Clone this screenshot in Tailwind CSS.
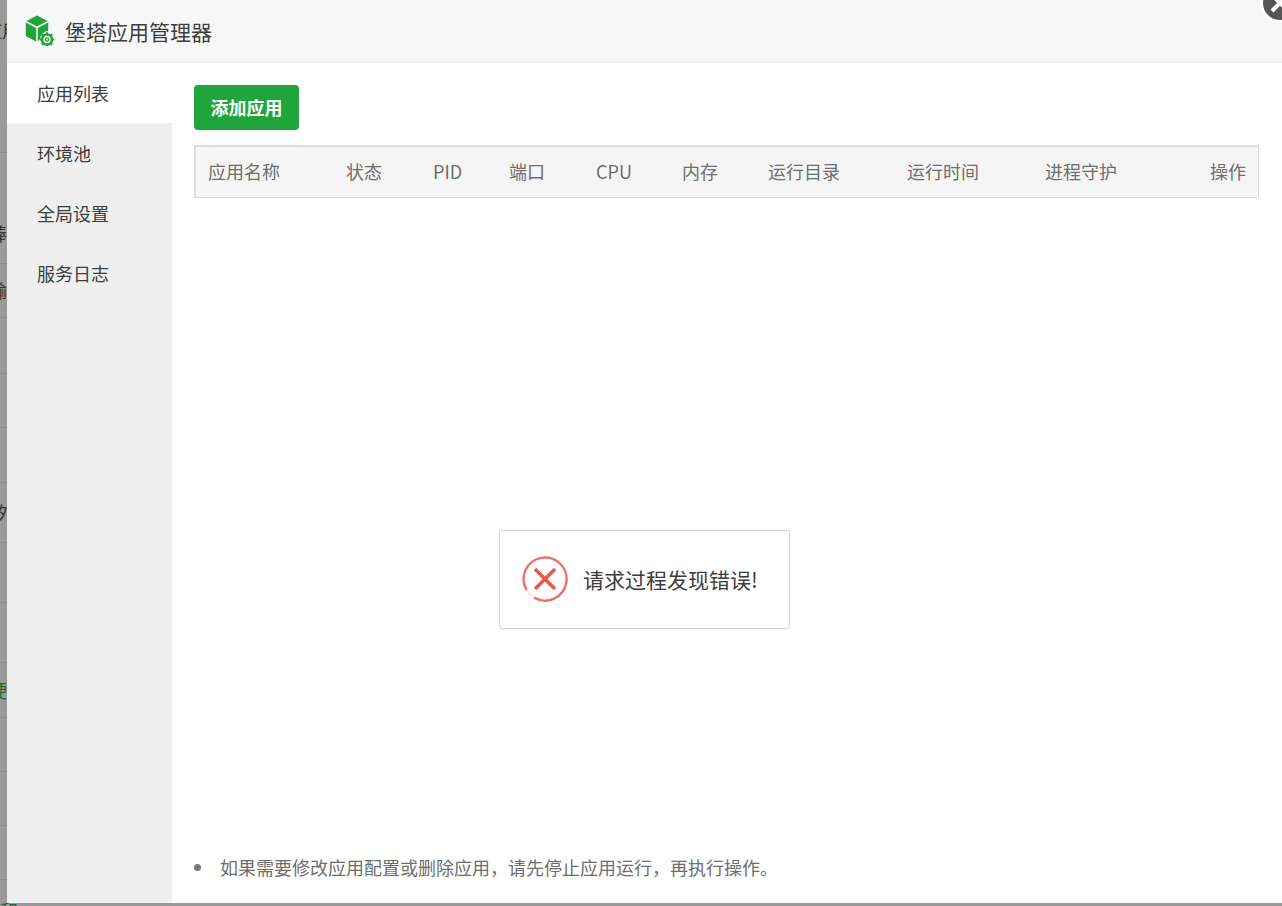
<!DOCTYPE html>
<html lang="zh-CN">
<head>
  <meta charset="UTF-8">
  <title>堡塔应用管理器</title>
  <script src="https://cdn.jsdelivr.net/npm/@tailwindcss/browser@4"></script>
</head>
<body class="relative h-[906px] w-[1282px] overflow-hidden bg-[#9a9a9a] font-['Noto_Sans_CJK_SC','Noto_Sans',sans-serif]">

  <!-- page behind the modal, only a sliver shows -->
  <div class="flex w-[40px] flex-col overflow-hidden text-[18px] leading-none whitespace-nowrap text-[#333]">
    <div class="h-[153px] border-b border-[#8c8c8c] pt-[21px]"><span class="-ml-[16px] block">应用</span></div>
    <div class="h-[111px] border-b border-[#8c8c8c]"><span class="-ml-[11px] block pt-[71px]">棒</span></div>
    <div class="h-[54px] border-b border-[#8c8c8c]"><span class="-ml-[11px] block pt-[17px]">输</span></div>
    <div class="h-[56px] border-b border-[#8c8c8c]"></div>
    <div class="h-[54px] border-b border-[#8c8c8c]"></div>
    <div class="h-[55px] border-b border-[#8c8c8c]"></div>
    <div class="h-[60px] border-b border-[#8c8c8c]"><span class="-ml-[3px] block pt-[20px]">外</span></div>
    <div class="h-[60px] border-b border-[#8c8c8c]"></div>
    <div class="h-[60px] border-b border-[#8c8c8c]"></div>
    <div class="h-[55px] border-b border-[#8c8c8c] text-[#1c6b30]"><span class="-ml-[11px] block pt-[18px]">硬</span></div>
    <div class="h-[54px] border-b border-[#8c8c8c]"></div>
    <div class="h-[54px] border-b border-[#8c8c8c]"></div>
    <div class="h-[54px] border-b border-[#8c8c8c]"></div>
    <div class="h-[26px] pt-[21px] text-[#1c6b30]">和</div>
  </div>

  <!-- modal -->
  <div class="absolute top-0 left-[7px] flex h-[903px] w-[1275px] flex-col bg-white">
    <header class="flex h-[63px] shrink-0 items-center border-b border-[#eee] bg-[#f7f7f7] pl-[17px]">
      <svg class="mb-[2px] h-[32px] w-[32px]" viewBox="0 0 32 32">
        <path fill="#20a53a" d="M13 1.5 23.6 7 13 12.6 2.4 7zM1.8 8.6 12.2 14v13.6L1.8 22zM24.2 8.6V17a8 8 0 0 0-8 7.6l-2.4 3V14z"/>
        <g fill="none" stroke="#20a53a" transform="translate(1 1)">
          <circle cx="22" cy="24.5" r="5" stroke-width="2.6"/>
          <circle cx="22" cy="24.5" r="1.6" stroke-width="1.2"/>
          <path stroke-width="2.2" d="M22 17.2v2.4M22 29.4v2.4M14.7 24.5h2.4M26.9 24.5h2.4M16.8 19.3l1.7 1.7M25.5 28l1.7 1.7M16.8 29.7l1.7-1.7M25.5 21l1.7-1.7"/>
        </g>
      </svg>
      <h1 class="ml-[9px] text-[21px] leading-none font-normal text-[#3d3d3d]">堡塔应用管理器</h1>
    </header>

    <div class="flex min-h-0 flex-1">
      <nav class="w-[165px] shrink-0 bg-[#efefef] text-[18px] text-[#3d3d3d]">
        <div class="flex h-[60px] items-center bg-white pl-[30px]">应用列表</div>
        <div class="flex h-[60px] items-center pl-[30px]">环境池</div>
        <div class="flex h-[60px] items-center pl-[30px]">全局设置</div>
        <div class="flex h-[60px] items-center pl-[30px]">服务日志</div>
      </nav>

      <main class="flex min-w-0 flex-1 flex-col pt-[22px] pr-[23px] pl-[22px]">
        <button class="h-[45px] w-[105px] rounded-[4px] bg-[#20a53a] text-[18px] font-bold text-white">添加应用</button>
        <div class="mt-[15px] grid h-[53px] grid-cols-[138px_87px_76px_87px_86px_86px_139px_138px_1fr_auto] items-center border border-t-2 border-l-2 border-[#ddd] bg-[#f5f5f5] pr-[12px] pb-[2px] pl-[12px] text-[18px] text-[#6e6e6e]">
          <span>应用名称</span>
          <span>状态</span>
          <span>PID</span>
          <span>端口</span>
          <span>CPU</span>
          <span>内存</span>
          <span>运行目录</span>
          <span>运行时间</span>
          <span>进程守护</span>
          <span class="text-right">操作</span>
        </div>
        <ul class="mt-auto mb-[23px] flex items-center text-[18px] leading-[26px] text-[#6e6e6e]">
          <li class="flex items-center">
            <span class="h-[7px] w-[7px] rounded-full bg-[#777]"></span>
            <span class="ml-[19px]">如果需要修改应用配置或删除应用，请先停止应用运行，再执行操作。</span>
          </li>
        </ul>
      </main>
    </div>
  </div>

  <!-- close button -->
  <div class="absolute -top-[17px] left-[1260px] flex h-[40px] w-[40px] items-center justify-center rounded-full border-[3px] border-white bg-[#555]">
    <svg class="h-[24px] w-[24px]" viewBox="0 0 24 24"><path stroke="#fff" stroke-width="4" d="M4 4l16 16M20 4 4 20"/></svg>
  </div>

  <!-- error toast -->
  <div class="absolute top-[530px] left-[499px] flex h-[99px] w-[291px] items-center rounded-[3px] border border-[#d3d3d3] bg-white pl-[22px]">
    <svg class="mb-[2px] h-[46px] w-[46px] shrink-0" viewBox="0 0 46 46" fill="none" stroke="#e9574d">
      <path stroke-width="2.4" opacity=".85" d="M12.2 41.6A21.5 21.5 0 1 0 4.7 34.2"/>
      <path stroke-width="1.6" opacity=".2" d="M4.7 34.2A21.5 21.5 0 0 0 12.2 41.6"/>
      <path stroke-width="3.6" d="M13 13l20 20M33 13 13 33"/>
    </svg>
    <span class="ml-[15px] text-[21px] leading-none whitespace-nowrap text-[#3d3d3d]">请求过程发现错误!</span>
  </div>
</body>
</html>
